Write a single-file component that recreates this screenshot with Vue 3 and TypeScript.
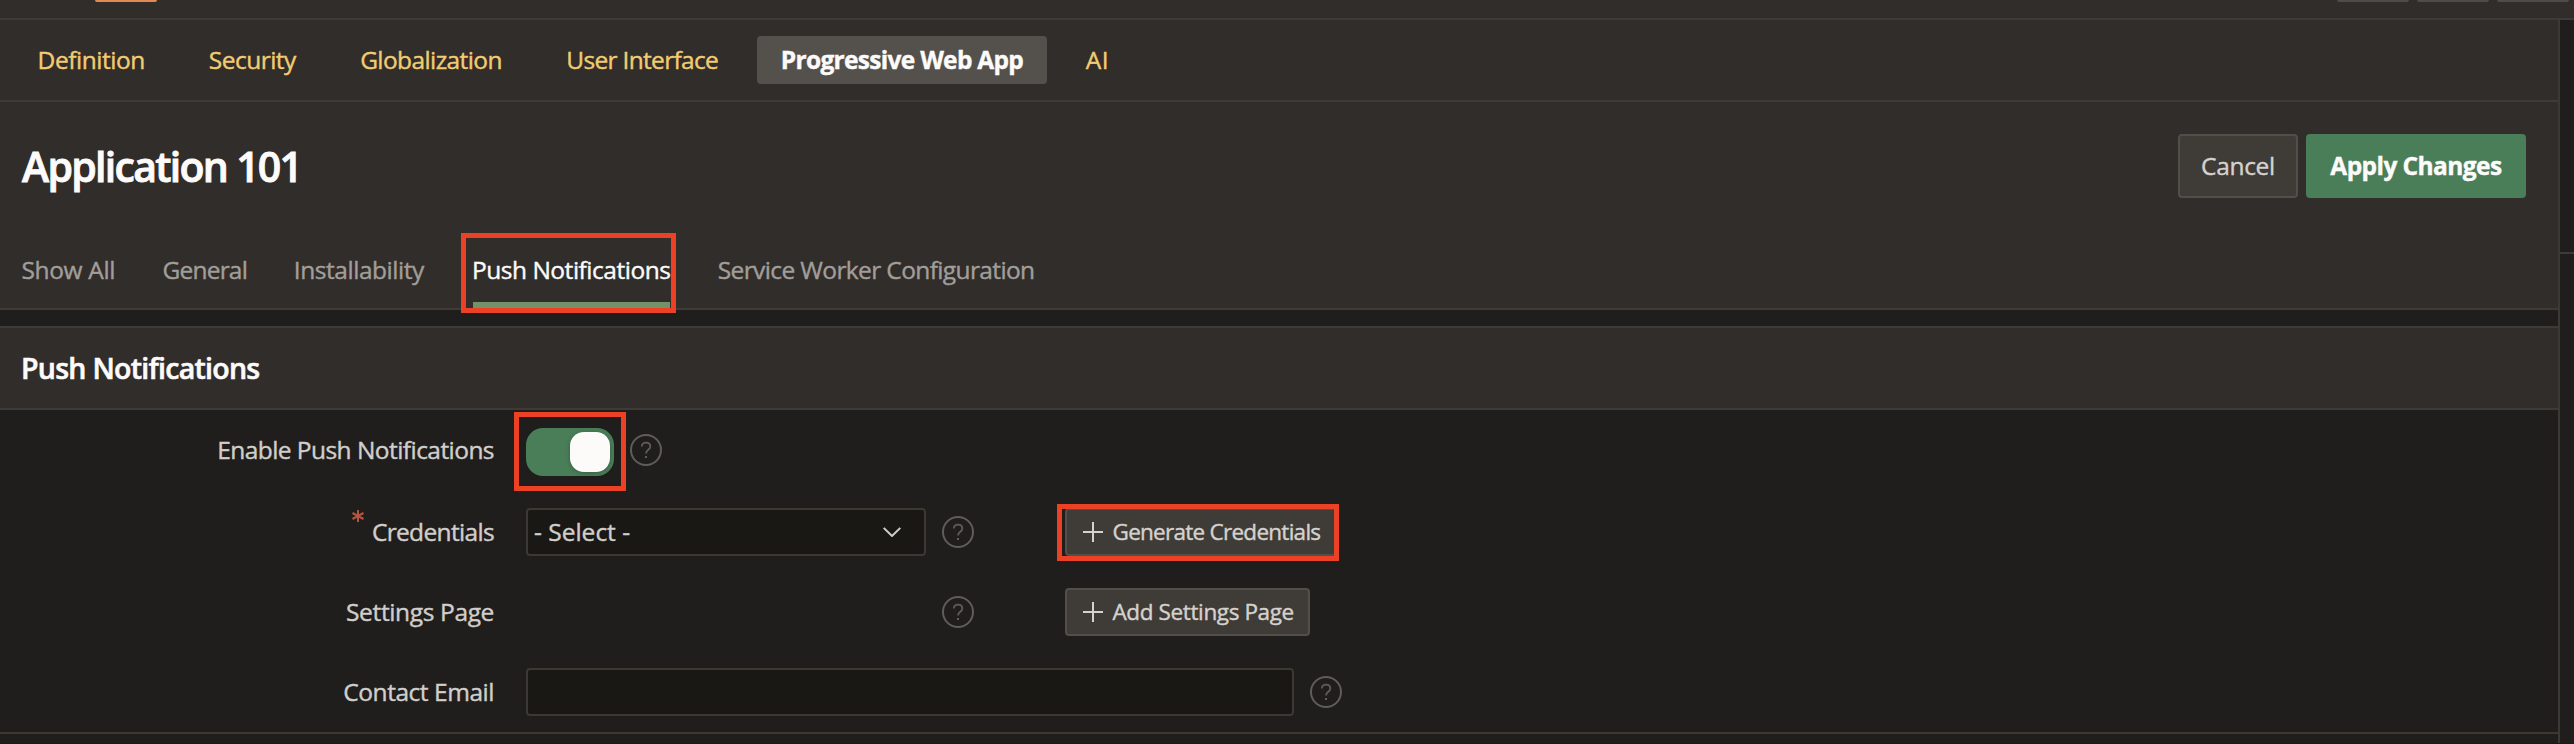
<script setup lang="ts">
interface Tab {
  label: string
  tracking: number
  current?: boolean
}

const mainTabs: Tab[] = [
  { label: 'Definition', tracking: -0.45 },
  { label: 'Security', tracking: -0.5 },
  { label: 'Globalization', tracking: -0.6 },
  { label: 'User Interface', tracking: -0.68 },
  { label: 'Progressive Web App', tracking: -0.7, current: true },
  { label: 'AI', tracking: 0.5 },
]

const subTabs: Tab[] = [
  { label: 'Show All', tracking: -0.34 },
  { label: 'General', tracking: -0.8 },
  { label: 'Installability', tracking: -0.45 },
  { label: 'Push Notifications', tracking: -0.48, current: true },
  { label: 'Service Worker Configuration', tracking: -0.62 },
]

const track = (px: number) => ({ letterSpacing: `${px}px` })
</script>

<template>
  <div class="page">
    <svg class="defs" width="0" height="0" aria-hidden="true">
      <symbol id="help" viewBox="0 0 32 32">
        <circle cx="16" cy="16" r="15" fill="none" stroke="currentColor" stroke-width="2" />
        <path d="M11.8 12.6c0-2.5 1.7-3.9 4.2-3.9s4.3 1.5 4.3 3.7c0 3.3-4.3 3.4-4.3 7.1" fill="none" stroke="currentColor" stroke-width="1.8" />
        <rect x="15" y="22" width="2" height="2" fill="currentColor" />
      </symbol>
      <symbol id="plus" viewBox="0 0 20 20">
        <path d="M10 0v20M0 10h20" fill="none" stroke="currentColor" stroke-width="2" />
      </symbol>
    </svg>

    <header class="topbar">
      <span class="chip accent"></span>
      <div class="chips"><span class="chip"></span><span class="chip"></span><span class="chip"></span></div>
    </header>

    <div class="body">
      <main class="main">
        <nav class="main-tabs">
          <a v-for="t in mainTabs" :key="t.label" :class="['main-tab', { current: t.current }]" :style="track(t.tracking)">{{ t.label }}</a>
        </nav>

        <div class="title-row">
          <h1>Application 101</h1>
          <div class="actions">
            <button class="btn cancel">Cancel</button>
            <button class="btn apply">Apply Changes</button>
          </div>
        </div>

        <nav class="sub-tabs">
          <a v-for="t in subTabs" :key="t.label" :class="['sub-tab', { current: t.current }]" :style="track(t.tracking)">
            <span>{{ t.label }}</span>
            <i v-if="t.current" class="mark mark-tab"></i>
          </a>
        </nav>

        <section class="region">
          <h2>Push Notifications</h2>
          <div class="form">
            <div class="row first">
              <label class="label" :style="track(-0.55)">Enable Push Notifications</label>
              <div class="switch"><span class="knob"></span><i class="mark mark-switch"></i></div>
              <svg class="help"><use href="#help" /></svg>
            </div>
            <div class="row">
              <label class="label" :style="track(-0.66)">
                <svg class="required" viewBox="0 0 12 12"><path d="M6 0v12M.5 3l11 6M11.5 3l-11 6" fill="none" stroke="currentColor" stroke-width="2" /></svg>
                Credentials
              </label>
              <div class="field select">
                <span>- Select -</span>
                <svg class="chevron" viewBox="0 0 18 10"><path d="M.7.9 9 9 17.3.9" fill="none" stroke="currentColor" stroke-width="2" /></svg>
              </div>
              <svg class="help"><use href="#help" /></svg>
              <button class="btn small generate"><svg class="plus"><use href="#plus" /></svg><span :style="track(-0.73)">Generate Credentials</span><i class="mark mark-generate"></i></button>
            </div>
            <div class="row">
              <label class="label" :style="track(-0.36)">Settings Page</label>
              <div class="blank"></div>
              <svg class="help"><use href="#help" /></svg>
              <button class="btn small add"><svg class="plus"><use href="#plus" /></svg><span :style="track(-0.38)">Add Settings Page</span></button>
            </div>
            <div class="row">
              <label class="label" :style="track(-0.46)">Contact Email</label>
              <div class="field email"></div>
              <svg class="help"><use href="#help" /></svg>
            </div>
          </div>
        </section>
      </main>
      <aside class="side"><div class="side-head"></div></aside>
    </div>
    <div class="foot"></div>
  </div>
</template>

<style>
body {
  margin: 0;
  background: #201e1c;
}
</style>

<style scoped>
.page {
  width: 2574px;
  height: 744px;
  overflow: hidden;
  display: flex;
  flex-direction: column;
  background: #201e1c;
  color: #fcfbfa;
  font: 24.5px "Open Sans", "Noto Sans", sans-serif;
  -webkit-text-stroke: 0.4px currentColor;
  white-space: nowrap;
}
.page * {
  box-sizing: border-box;
}
.defs {
  position: absolute;
}
.topbar {
  height: 20px;
  flex: none;
  display: flex;
  justify-content: space-between;
  align-items: flex-start;
  padding: 0 5px 0 95px;
  background: #312d2a;
  border-bottom: 2px solid #3e3a37;
}
.chips {
  display: flex;
  gap: 8px;
}
.chip {
  width: 72px;
  height: 2px;
  border-radius: 0 0 3px 3px;
  background: #504b47;
}
.chip.accent {
  width: 62px;
  background: #e18b52;
}
.body {
  height: 723px;
  flex: none;
  display: flex;
}
.main {
  width: 2560px;
  border-right: 2px solid #3c3935;
}
.main-tabs {
  height: 82px;
  display: grid;
  grid-template-columns: 157.5px 164.6px 192.8px 229.6px 290px 101px;
  padding: 16px 0 16px 12.5px;
  background: #312d2a;
  border-bottom: 2px solid #3e3a37;
}
.main-tab {
  height: 48px;
  line-height: 47px;
  text-align: center;
  border-radius: 4px;
  color: #f1cc71;
}
.main-tab.current {
  background: #54504b;
  color: #fcfbfa;
  font-weight: 700;
}
.title-row {
  height: 128px;
  display: flex;
  align-items: center;
  justify-content: space-between;
  padding: 0 32px 0 22px;
  background: #312d2a;
}
h1 {
  margin: 0;
  font-size: 41px;
  font-weight: 600;
  line-height: 56px;
  letter-spacing: -1.7px;
  -webkit-text-stroke: 0.9px currentColor;
}
.actions {
  display: flex;
  gap: 8px;
}
.btn {
  display: flex;
  align-items: center;
  justify-content: center;
  height: 64px;
  padding: 0 0 1px;
  border: 2px solid #524e49;
  border-radius: 4px;
  background: #3f3b37;
  color: #d5d2ce;
  font-family: inherit;
  font-size: 24.5px;
}
.cancel {
  width: 120px;
  letter-spacing: -0.3px;
}
.apply {
  width: 220px;
  border-color: #4a7e58;
  background: #4a7e58;
  color: #fcfbfa;
  font-weight: 700;
  letter-spacing: -0.58px;
}
.sub-tabs {
  height: 80px;
  display: grid;
  grid-template-columns: 141.1px 131.3px 179.2px 244.8px auto;
  justify-content: start;
  padding-left: 21.4px;
  background: #312d2a;
  border-bottom: 2px solid #3e3b36;
}
.sub-tab {
  position: relative;
  line-height: 79px;
  color: #a19e9a;
}
.sub-tab.current {
  width: 197px;
  height: 78px;
  box-shadow: inset 0 -6px #739268;
  color: #fcfbfa;
}
.sub-tab.current span {
  margin-left: -1px;
}
.mark {
  position: absolute;
  border: 5px solid #ec4125;
}
.mark-tab {
  left: -12px;
  top: 3px;
  width: 215px;
  height: 80px;
}
.region {
  margin-top: 16px;
}
h2 {
  margin: 0;
  height: 84px;
  padding-left: 21px;
  border: solid #3e3b36;
  border-width: 2px 0;
  background: #312d2a;
  font-size: 28.5px;
  font-weight: 600;
  line-height: 80px;
  letter-spacing: -0.72px;
  -webkit-text-stroke: 0.6px currentColor;
}
.form {
  height: 324px;
  border-bottom: 2px solid #3c3933;
}
.row {
  height: 80px;
  display: flex;
  align-items: center;
}
.row.first {
  height: 82px;
}
.label {
  width: 494px;
  margin-right: 32px;
  padding-bottom: 1px;
  display: flex;
  align-items: center;
  justify-content: flex-end;
  color: #d1cecb;
}
.first .label {
  padding-bottom: 3px;
}
.required {
  width: 12px;
  height: 12px;
  margin: 0 8px 31px 0;
  color: #b8533f;
}
.switch {
  position: relative;
  width: 88px;
  height: 48px;
  margin-top: 2px;
  padding: 4px;
  display: flex;
  justify-content: flex-end;
  border-radius: 17px;
  background: #4a7e58;
}
.knob {
  width: 40px;
  height: 40px;
  border-radius: 14px;
  background: #fcfbfa;
  box-shadow: 0 1px 5px rgba(0, 0, 0, 0.25);
}
.mark-switch {
  left: -12px;
  top: -16px;
  width: 112px;
  height: 79px;
}
.help {
  width: 32px;
  height: 32px;
  margin-left: 16px;
  color: #5f5c59;
}
.first .help {
  margin-bottom: 2px;
}
.field {
  height: 48px;
  border: 2px solid #3c3934;
  border-radius: 4px;
  background: #191815;
}
.select {
  width: 400px;
  display: flex;
  align-items: center;
  justify-content: space-between;
  padding: 0 23px 1px 6px;
  color: #d1cecb;
}
.chevron {
  width: 18px;
  height: 10px;
}
.blank {
  width: 400px;
}
.email {
  width: 768px;
}
.small {
  position: relative;
  justify-content: flex-start;
  height: 48px;
  margin-left: 91px;
  padding: 0 0 0 16px;
  font-size: 22.5px;
}
.small span {
  padding-bottom: 2px;
}
.generate {
  width: 272px;
}
.add {
  width: 245px;
}
.plus {
  width: 20px;
  height: 20px;
  margin-right: 9.5px;
}
.mark-generate {
  left: -10px;
  top: -6px;
  width: 282px;
  height: 57px;
}
.side {
  width: 14px;
}
.side-head {
  height: 234px;
  border-bottom: 2px solid #3e3b36;
}
.foot {
  height: 1px;
  flex: none;
  background: #22161b;
}
</style>
